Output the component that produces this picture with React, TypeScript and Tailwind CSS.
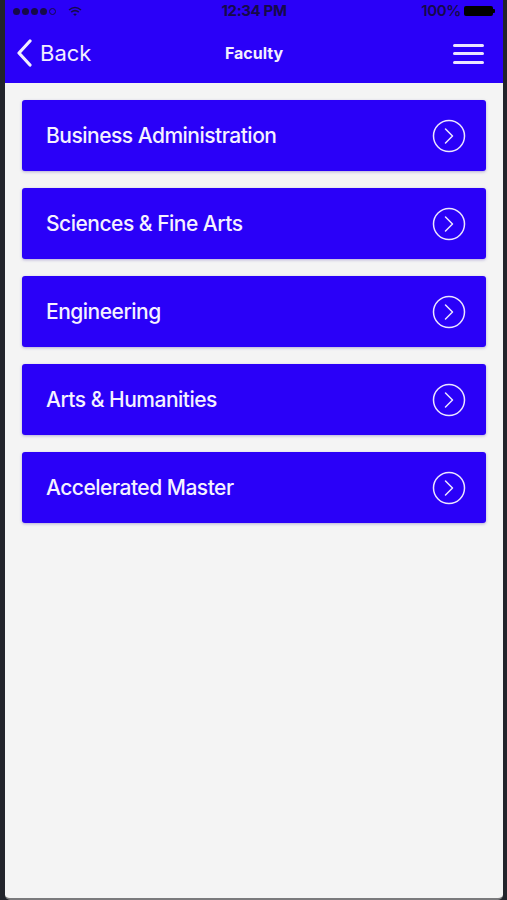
import React from "react";

const faculties = [
  "Business Administration",
  "Sciences & Fine Arts",
  "Engineering",
  "Arts & Humanities",
  "Accelerated Master",
];

const StatusBar = () => (
  <div className="relative flex h-[22px] items-center px-[8px] text-[#160a4a]">
    <div className="flex items-center gap-[2px]">
      {[0, 1, 2, 3].map((i) => (
        <span key={i} className="h-[7px] w-[7px] rounded-full bg-[#160a4a]" />
      ))}
      <span className="h-[7px] w-[7px] rounded-full border border-[#160a4a]" />
    </div>
    <svg width="14" height="11" viewBox="0 0 14 11" className="ml-[12px]">
      <path d="M1 4 Q7 -1 13 4" stroke="#160a4a" strokeWidth="1.6" fill="none" />
      <path d="M3.2 6.2 Q7 3 10.8 6.2" stroke="#160a4a" strokeWidth="1.6" fill="none" />
      <path d="M7 10 L5.2 8.2 Q7 6.8 8.8 8.2 Z" fill="#160a4a" />
    </svg>
    <span className="absolute left-1/2 -translate-x-1/2 text-[15px] font-bold tracking-tight">12:34 PM</span>
    <div className="ml-auto flex items-center gap-[3px]">
      <span className="text-[15px] font-semibold tracking-tight">100%</span>
      <div className="flex items-center">
        <span className="h-[10px] w-[29px] rounded-[2px] bg-black" />
        <span className="h-[4px] w-[2px] rounded-r-[1px] bg-black" />
      </div>
    </div>
  </div>
);

const NavBar = () => (
  <div className="relative flex h-[61px] items-center pl-[10px] pr-[19px] text-white">
    <div className="flex items-center gap-[7px]">
      <svg width="18" height="28" viewBox="0 0 18 28">
        <path d="M15 2 L4 14 L15 26" stroke="#f2eeff" strokeWidth="3.2" fill="none" strokeLinecap="round" strokeLinejoin="round" />
      </svg>
      <span className="text-[22px] leading-none text-[#f2eeff]">Back</span>
    </div>
    <span className="absolute left-1/2 -translate-x-1/2 text-[16px] font-bold text-[#f2eeff]">Faculty</span>
    <div className="ml-auto mt-[2px] flex w-[31px] flex-col gap-[5.5px]">
      <span className="h-[3px] rounded-full bg-[#ece6ff]" />
      <span className="h-[3px] rounded-full bg-[#ece6ff]" />
      <span className="h-[3px] rounded-full bg-[#ece6ff]" />
    </div>
  </div>
);

const ChevronCircle = () => (
  <svg width="34" height="34" viewBox="0 0 34 34">
    <circle cx="17" cy="17" r="15.5" stroke="#ece6ff" strokeWidth="1.5" fill="none" />
    <path d="M13.5 10 L20.5 17 L13.5 24" stroke="#ece6ff" strokeWidth="1.5" fill="none" strokeLinecap="round" strokeLinejoin="round" />
  </svg>
);

export default function App() {
  return (
    <div
      className="flex h-[900px] w-[507px] bg-[#22242b]"
      style={{ fontFamily: "Inter, 'Noto Sans', sans-serif" }}
    >
      <div className="ml-[5px] mr-[4px] flex flex-1 flex-col overflow-hidden rounded-b-[5px] border-b-2 border-[#7a7a7c] bg-[#f4f4f4]">
        <div className="bg-[#2a00f8]">
          <StatusBar />
          <NavBar />
        </div>
        <div className="flex flex-col gap-[17px] px-[17px] pt-[17px]">
          {faculties.map((name) => (
            <div
              key={name}
              className="flex h-[71px] items-center justify-between rounded-[3px] bg-[#2a00f8] pl-[24px] pr-[20px] shadow-[0_1px_3px_rgba(60,40,160,0.35)]"
            >
              <span className="pt-[1px] text-[21px] font-medium tracking-[-0.5px] text-[#f5f2ff]">{name}</span>
              <ChevronCircle />
            </div>
          ))}
        </div>
      </div>
    </div>
  );
}
